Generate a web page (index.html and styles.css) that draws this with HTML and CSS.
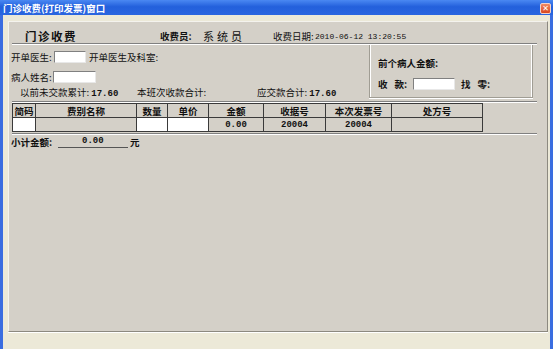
FILE: index.html
```html
<!DOCTYPE html>
<html lang="zh-CN">
<head>
  <meta charset="UTF-8">
  <title>门诊收费(打印发票)窗口</title>
  <link rel="stylesheet" href="styles.css">
</head>
<body>
  <div class="window">
    <!-- 标题栏 -->
    <div class="titlebar">
      <span class="title-text">门诊收费(打印发票)窗口</span>
      <span class="close">✕</span>
    </div>

    <div class="frame">
      <div class="panel">
        <!-- 顶部信息 -->
        <div class="header">
          <span class="caption">门诊收费</span>
          <span class="cashier-lbl">收费员:</span>
          <span class="cashier">系统员</span>
          <span class="date-lbl">收费日期:</span>
          <span class="mono">2010-06-12 13:20:55</span>
        </div>
        <div class="sep"></div>

        <div class="upper">
          <div class="left">
            <div class="row">
              <span class="lbl">开单医生:</span>
              <span class="input w32"></span>
              <span class="after">开单医生及科室:</span>
            </div>
            <div class="row row2">
              <span class="lbl lbl2">病人姓名:</span>
              <span class="input w43"></span>
            </div>
            <div class="row row3">
              <span class="sum1">以前未交款累计: <b class="num">17.60</b></span>
              <span class="sum2">本班次收款合计:</span>
              <span>应交款合计: <b class="num">17.60</b></span>
            </div>
          </div>

          <div class="prev">
            <div class="prev-title">前个病人金额:</div>
            <div class="prev-row">
              <span class="pay-lbl"><span class="spaced">收</span>款:</span>
              <span class="input w42"></span>
              <span class="change"><span class="spaced">找</span>零:</span>
            </div>
          </div>
        </div>
        <div class="sep"></div>

        <!-- 费用明细 -->
        <div class="grid">
          <div class="cell">简码</div>
          <div class="cell">费别名称</div>
          <div class="cell">数量</div>
          <div class="cell">单价</div>
          <div class="cell">金额</div>
          <div class="cell">收据号</div>
          <div class="cell">本次发票号</div>
          <div class="cell">处方号</div>

          <div class="cell white"></div>
          <div class="cell"></div>
          <div class="cell white"></div>
          <div class="cell white"></div>
          <div class="cell num">0.00</div>
          <div class="cell num">20004</div>
          <div class="cell num">20004</div>
          <div class="cell"></div>
        </div>
        <div class="sep sep3"></div>

        <div class="subtotal">
          <span class="sub-lbl">小计金额:</span>
          <span class="sub-val num">0.00</span>
          <span class="yuan">元</span>
        </div>
      </div>
    </div>
  </div>
</body>
</html>
```

FILE: styles.css
```css
* {
  box-sizing: border-box;
}

body {
  margin: 0;
  width: 553px;
  height: 349px;
  overflow: hidden;
  font-family: "Noto Sans CJK SC", sans-serif;
  font-size: 9.5px;
  color: #111;
}

.window {
  display: flex;
  flex-direction: column;
  height: 349px;
}

.titlebar {
  display: flex;
  align-items: center;
  justify-content: space-between;
  height: 15px;
  padding: 0 2px 0 3px;
  background: linear-gradient(#4a88f2, #2360dc 45%, #2a66e0);
}

.title-text {
  color: #fff;
  font-weight: bold;
  font-size: 9.5px;
  line-height: 12px;
}

.close {
  width: 11px;
  height: 11px;
  margin-top: 2px;
  border: 1px solid #f2d2c8;
  border-radius: 2px;
  background: linear-gradient(#f08a62, #d9461f);
  color: #fff;
  font-family: "DejaVu Sans", sans-serif;
  font-size: 8px;
  font-weight: bold;
  line-height: 9px;
  text-align: center;
}

.frame {
  flex: 1;
  padding: 6px 2px 0 5px;
  background: #ECE9D8;
  border-left: 3px solid #3a6de0;
  border-right: 3px solid #3a6de0;
}

.panel {
  height: 311px;
  padding-left: 2px;
  background: #D4D0C8;
  border: 1px solid;
  border-color: #f4f3ee #8c8980 #8c8980 #f4f3ee;
  box-shadow: 0 1px 0 #fff;
}

.header {
  display: flex;
  align-items: center;
  height: 21px;
  padding-top: 7px;
}

.caption {
  width: 135px;
  margin-left: 14px;
  font-size: 11.5px;
  font-weight: bold;
  letter-spacing: 1.5px;
}

.cashier-lbl {
  width: 43px;
  font-weight: bold;
}

.cashier {
  width: 70px;
  font-size: 11px;
  letter-spacing: 3px;
}

.date-lbl {
  width: 42px;
}

.mono {
  font-family: "Liberation Mono", monospace;
  font-size: 8px;
}

.num {
  font-family: "Liberation Mono", monospace;
  font-size: 9px;
  font-weight: bold;
}

.sep {
  width: 525px;
  margin-left: 1px;
  border-top: 1px solid #808080;
  border-bottom: 1px solid #fff;
}

.upper {
  display: flex;
  height: 56px;
}

.left {
  width: 358px;
  padding-top: 4px;
}

.row {
  display: flex;
  align-items: center;
  height: 16px;
}

.row2 {
  margin-top: 4px;
}

.row3 {
  height: 14px;
  padding-left: 9px;
}

.lbl {
  width: 43px;
}

.lbl2 {
  width: 42px;
}

.input {
  height: 12px;
  background: #fff;
  border: 1px solid;
  border-color: #808080 #e8e8e8 #e8e8e8 #808080;
}

.w32 { width: 32px; }
.w42 { width: 42px; }
.w43 { width: 43px; }

.after {
  margin-left: 3px;
}

.sum1 {
  width: 117px;
}

.sum2 {
  width: 120px;
}

.prev {
  width: 164px;
  height: 53px;
  padding: 12px 0 0 8px;
  border: 1px solid #a09d94;
  border-top: none;
  box-shadow: inset 1px 0 #fff, inset -1px 0 #fff, 0 1px 0 #fff;
  font-weight: bold;
}

.prev-title {
  height: 12px;
  line-height: 12px;
}

.prev-row {
  display: flex;
  align-items: center;
  height: 12px;
  margin-top: 9px;
}

.pay-lbl {
  width: 35px;
}

.spaced {
  margin-right: 7px;
}

.change {
  margin-left: 6px;
}

.grid {
  display: grid;
  grid-template-columns: 23px 101px 31px 41px 55px 62px 66px 91px;
  grid-auto-rows: 14px;
  width: 471px;
  margin-left: 1px;
  border-left: 1px solid #3a3a3a;
  border-top: 1px solid #3a3a3a;
}

.cell {
  display: flex;
  align-items: center;
  justify-content: center;
  border-right: 1px solid #3a3a3a;
  border-bottom: 1px solid #3a3a3a;
  font-weight: bold;
  line-height: 12px;
}

.cell.white {
  background: #fff;
}

.sep3 {
  margin-top: 1px;
}

.subtotal {
  display: flex;
  align-items: center;
  height: 13px;
}

.sub-lbl {
  width: 47px;
  font-weight: bold;
}

.sub-val {
  width: 70px;
  height: 13px;
  padding-left: 24px;
  border-bottom: 1px solid #555;
  line-height: 12px;
}

.yuan {
  margin-left: 2px;
  font-weight: bold;
}
```
